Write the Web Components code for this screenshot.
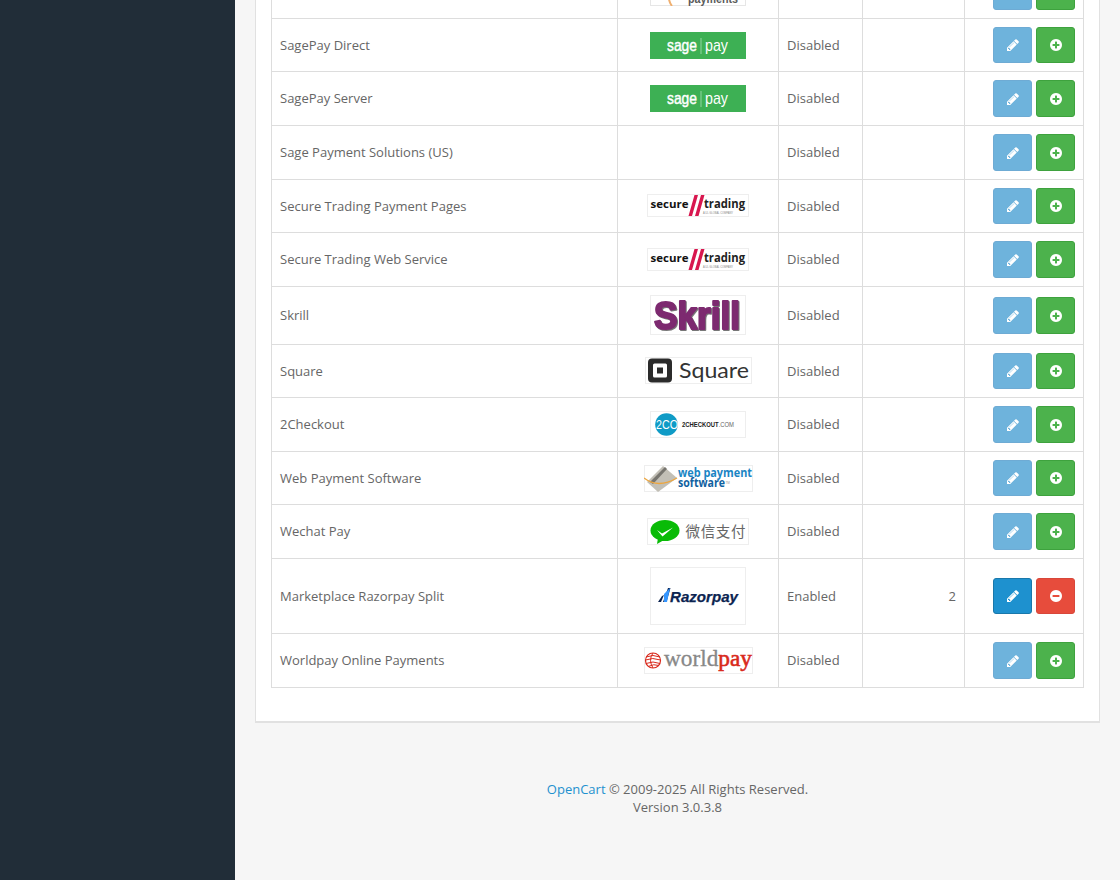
<!DOCTYPE html>
<html lang="en"><head><meta charset="utf-8"><title>Payments</title>
<style>
html,body{margin:0;padding:0;height:880px;overflow:hidden;background:#f6f6f6;font-family:"Open Sans",sans-serif;font-size:13px;color:#666}
</style></head>
<body>
<oc-app>
  <oc-card>
    <pay-table>
      <pay-row h="53" logo="payments" hide-name></pay-row>
      <pay-row h="53" name="SagePay Direct" logo="sage"></pay-row>
      <pay-row h="54" name="SagePay Server" logo="sage"></pay-row>
      <pay-row h="54" name="Sage Payment Solutions (US)"></pay-row>
      <pay-row h="53" name="Secure Trading Payment Pages" logo="secure" logo-up></pay-row>
      <pay-row h="54" name="Secure Trading Web Service" logo="secure"></pay-row>
      <pay-row h="58" name="Skrill" logo="skrill" logo-up></pay-row>
      <pay-row h="53" name="Square" logo="square" logo-up></pay-row>
      <pay-row h="54" name="2Checkout" logo="2co"></pay-row>
      <pay-row h="53" name="Web Payment Software" logo="wps"></pay-row>
      <pay-row h="54" name="Wechat Pay" logo="wechat"></pay-row>
      <pay-row h="75" name="Marketplace Razorpay Split" logo="razorpay" status="Enabled" order="2" enabled></pay-row>
      <pay-row h="54" name="Worldpay Online Payments" logo="worldpay"></pay-row>
    </pay-table>
  </oc-card>
  <oc-footer slot="footer"><a href="#">OpenCart</a> © 2009-2025 All Rights Reserved.<br>Version 3.0.3.8</oc-footer>
</oc-app>
<script>
const FA={
 pencil:"M491 1536l91-91-235-235-91 91v107h128v128h107zm523-928q0-22-22-22-10 0-17 7l-542 542q-7 7-7 17 0 22 22 22 10 0 17-7l542-542q7-7 7-17zm-54-192l416 416-832 832h-416v-416zm683 96q0 53-37 90l-166 166-416-416 166-165q36-38 90-38 53 0 91 38l235 234q37 39 37 91z",
 plus:"M1344 960v-128q0-26-19-45t-45-19h-256v-256q0-26-19-45t-45-19h-128q-26 0-45 19t-19 45v256h-256q-26 0-45 19t-19 45v128q0 26 19 45t45 19h256v256q0 26 19 45t45 19h128q26 0 45-19t19-45v-256h256q26 0 45-19t19-45zm320-64q0 209-103 385.5t-279.5 279.5-385.5 103-385.5-103-279.5-279.5-103-385.5 103-385.5 279.5-279.5 385.5-103 385.5 103 279.5 279.5 103 385.5z",
 minus:"M1344 960v-128q0-26-19-45t-45-19h-768q-26 0-45 19t-19 45v128q0 26 19 45t45 19h768q26 0 45-19t19-45zm320-64q0 209-103 385.5t-279.5 279.5-385.5 103-385.5-103-279.5-279.5-103-385.5 103-385.5 279.5-279.5 385.5-103 385.5 103 279.5 279.5 103 385.5z"
};
const S='font-family="Liberation Sans,sans-serif"', O='font-family="Open Sans,sans-serif"';
const LOGOS={
 payments:[96,27,`<rect x=".5" y=".5" width="95" height="26" fill="#fff" stroke="#e6e6e6"/><path d="M19 15q-1 7 3 12" fill="none" stroke="#f0b070" stroke-width="2"/><text x="38" y="23.5" ${S} font-size="12.5" font-weight="700" fill="#5a5a5a" textLength="50" lengthAdjust="spacingAndGlyphs">payments</text>`],
 sage:[96,27,`<rect width="96" height="27" fill="#3db054"/><text x="17" y="18.5" ${S} font-size="17" fill="#fff" stroke="#fff" stroke-width=".45" textLength="30" lengthAdjust="spacingAndGlyphs">sage</text><rect x="50.500" y="6" width="1" height="16" fill="#8fd39f"/><text x="55" y="18.5" ${S} font-size="17" fill="#fff" textLength="23" lengthAdjust="spacingAndGlyphs">pay</text>`],
 secure:[102,23,`<rect x=".5" y=".5" width="101" height="22" fill="#fff" stroke="#eee"/><text x="3.5" y="14" ${O} font-size="11" font-weight="700" fill="#111" textLength="38" lengthAdjust="spacingAndGlyphs">secure</text><path d="M47.500 1h3.500L45 22h-3.500zM54 1h3.500L51.500 22H48z" fill="#d8174f"/><text x="57" y="14" ${O} font-size="11.500" font-weight="700" fill="#222" textLength="41" lengthAdjust="spacingAndGlyphs">trading</text><text x="56" y="20" ${S} font-size="2.600" fill="#888" textLength="30">A UL GLOBAL COMPANY</text>`],
 skrill:[96,40,`<rect x=".5" y=".5" width="95" height="39" fill="#fff" stroke="#eee"/><text x="4" y="33.500" ${S} font-size="39" font-weight="700" fill="#7d2a70" stroke="#7d2a70" stroke-width="2.200" stroke-linejoin="round" textLength="86" lengthAdjust="spacingAndGlyphs" style="filter:drop-shadow(1.500px 1.500px .6px #777)">Skrill</text>`],
 square:[107,27,`<rect x=".5" y=".5" width="106" height="26" fill="#fff" stroke="#eee"/><rect x="3" y="1.500" width="24" height="24" rx="4" fill="#2b2b2b"/><rect x="8" y="6.500" width="14" height="14" rx="1.500" fill="#fff"/><rect x="12" y="10.500" width="6" height="6" fill="#2b2b2b"/><text x="34" y="20.500" font-family="Lato,sans-serif" font-size="22" fill="#333" textLength="70" lengthAdjust="spacingAndGlyphs">Square</text>`],
 "2co":[96,27,`<rect x=".5" y=".5" width="95" height="26" fill="#fff" stroke="#eee"/><circle cx="16.500" cy="13.500" r="11.300" fill="#0f9bc6"/><text x="6" y="18" ${S} font-size="12" fill="#fff" textLength="22" lengthAdjust="spacingAndGlyphs">2CO</text><text x="32" y="16" ${S} font-size="6.400" font-weight="700" fill="#222" textLength="52" lengthAdjust="spacingAndGlyphs">2CHECKOUT<tspan font-weight="400" fill="#666">.COM</tspan></text>`],
 wps:[109,27,`<rect x=".5" y=".5" width="108" height="26" fill="#fff" stroke="#eee"/><path d="M3 17L19 1l14 12-19 14z" fill="#c2bfb6"/><path d="M6 17L21 2l2 2L9 19z" fill="#77756f"/><path d="M0 13q14 11 33 0" fill="none" stroke="#eda63f" stroke-width="1.300"/><text x="34" y="12" ${O} font-size="11.500" font-weight="700" fill="#1a85c4" textLength="74" lengthAdjust="spacingAndGlyphs">web payment</text><text x="34" y="22" ${O} font-size="11.500" font-weight="700" fill="#10619f" textLength="47" lengthAdjust="spacingAndGlyphs">software</text><text x="81.500" y="19" ${S} font-size="3" fill="#999">TM</text>`],
 wechat:[102,27,`<rect x=".5" y=".5" width="101" height="26" fill="#fff" stroke="#eee"/><ellipse cx="18" cy="12.500" rx="14.500" ry="10.500" fill="#09bb07"/><path d="M11 20l-1 6 7-4z" fill="#09bb07"/><path d="M10 12l5 3.500 11-6-10.500 9z" fill="#fff"/><text x="38.500" y="18.500" font-family="Noto Sans CJK SC,sans-serif" font-size="14.500" fill="#666" textLength="60" lengthAdjust="spacing">微信支付</text>`],
 razorpay:[96,58,`<rect x=".5" y=".5" width="95" height="57" fill="#fff" stroke="#eee"/><path d="M8 35l4-6 2-1-3 7z" fill="#0c2451"/><path d="M13 35l5-14h2.500l-4 14z" fill="#0c2451"/><path d="M14 27l6-6-3 14h-3z" fill="#3395ff"/><text x="20" y="35" ${S} font-size="15.500" font-weight="700" font-style="italic" fill="#0c2451" stroke="#0c2451" stroke-width=".25" textLength="68" lengthAdjust="spacingAndGlyphs">Razorpay</text>`],
 worldpay:[109,27,`<rect x=".5" y=".5" width="108" height="26" fill="#fff" stroke="#eee"/><circle cx="9" cy="13.500" r="7.500" fill="none" stroke="#d9291c" stroke-width="1.200"/><path d="M2 10q7-3 14 0M1.500 13q7-3 15 0M2 16.500q7-3 14 0M4 19.500q6-3 11-1M9 6q-5 7 0 15" fill="none" stroke="#d9291c" stroke-width="1"/><text x="20" y="19" font-family="Liberation Serif,serif" font-size="24" fill="#888" stroke="#888" stroke-width=".3" textLength="88" lengthAdjust="spacingAndGlyphs">world<tspan fill="#d9291c" stroke="#d9291c" stroke-width=".6">pay</tspan></text>`]
};
const def=(name,css,html,extra)=>{customElements.define(name,class extends HTMLElement{
  constructor(){super();this.attachShadow({mode:"open"}).innerHTML=`<style>${css}</style>${html}`}
  connectedCallback(){extra&&extra.call(this,this.shadowRoot)}
})};
def("oc-app",`:host{display:flex;height:880px;overflow:hidden}
 .side{flex:0 0 235px;background:#212d38}
 .main{flex:1;min-width:0;height:880px;overflow:hidden;display:flex;flex-direction:column;justify-content:flex-end;padding:0 20px;box-sizing:border-box}`,
 `<div class="side"></div><div class="main"><slot></slot><slot name="footer"></slot></div>`);
def("oc-card",`:host{display:block;flex:none;background:#fff;border:1px solid #e1e1e1;border-bottom-width:2px;padding:0 15px 33px}`,`<slot></slot>`);
def("pay-table",`:host{display:block;border:solid #ddd;border-width:0 1px;box-sizing:border-box;width:813px}`,`<slot></slot>`);
def("oc-footer",`:host{display:block;flex:none;text-align:center;font-size:13px;line-height:18px;color:#666;padding:57px 0 64px}
 ::slotted(a){color:#1e91cf;text-decoration:none}`,`<slot></slot>`);
def("fa-icon",`:host{display:inline-flex}svg{width:14px;height:14px;fill:currentColor;display:block}`,`<svg viewBox="0 0 1792 1792"><path/></svg>`,function(r){r.querySelector("path").setAttribute("d",FA[this.getAttribute("name")])});
def("pay-button",`:host{display:flex;align-items:center;justify-content:center;box-sizing:border-box;width:39px;height:36.6px;border-radius:3px;color:#fff;border:1px solid}
 :host([kind=edit]){background:#1e91cf;border-color:#1978ab}
 :host([kind=edit][muted]){background:#6eb3dc;border-color:#6eabd4}
 :host([kind=add]){background:#4cb24c;border-color:#3ea23e}
 :host([kind=remove]){background:#e74c3c;border-color:#d8473a}`,`<slot></slot>`);
def("pay-logo",`:host{display:block;line-height:0}svg{display:block}`,``,function(r){
 const l=LOGOS[this.getAttribute("kind")];if(!l)return;
 if(l[0]%2)this.style.marginLeft="1px";
 const t=document.createElement("template");t.innerHTML=`<svg width="${l[0]}" height="${l[1]}" viewBox="0 0 ${l[0]} ${l[1]}">${l[2]}</svg>`;r.append(t.content);
});
def("pay-row",`:host{display:grid;grid-template-columns:345px 161px 84px 102px 119px;box-sizing:border-box;border-bottom:1px solid #ddd;font-size:13px;color:#666}
 .c{display:flex;align-items:center;padding:0 8px 1px;box-sizing:border-box;min-width:0;white-space:nowrap}
 .c+.c{border-left:1px solid #ddd}
 .logo{justify-content:center;padding:0}
 :host([logo-up]) .logo{padding-bottom:1px}
 .order{justify-content:flex-end}
 .act{justify-content:flex-end;gap:4px;padding-bottom:0}`,
 `<div class="c name"></div><div class="c logo"></div><div class="c status"></div><div class="c order"></div><div class="c act"></div>`,
 function(r){
  const g=a=>this.getAttribute(a),on=this.hasAttribute("enabled");
  this.style.height=g("h")+"px";
  if(!this.hasAttribute("hide-name")){r.querySelector(".name").textContent=g("name");r.querySelector(".status").textContent=g("status")||"Disabled";}
  if(g("order"))r.querySelector(".order").textContent=g("order");
  if(g("logo")){const l=document.createElement("pay-logo");l.setAttribute("kind",g("logo"));r.querySelector(".logo").append(l)}
  r.querySelector(".act").innerHTML=`<pay-button kind="edit" ${on?"":"muted"}><fa-icon name="pencil"></fa-icon></pay-button><pay-button kind="${on?"remove":"add"}"><fa-icon name="${on?"minus":"plus"}"></fa-icon></pay-button>`;
 });
</script>
</body></html>
